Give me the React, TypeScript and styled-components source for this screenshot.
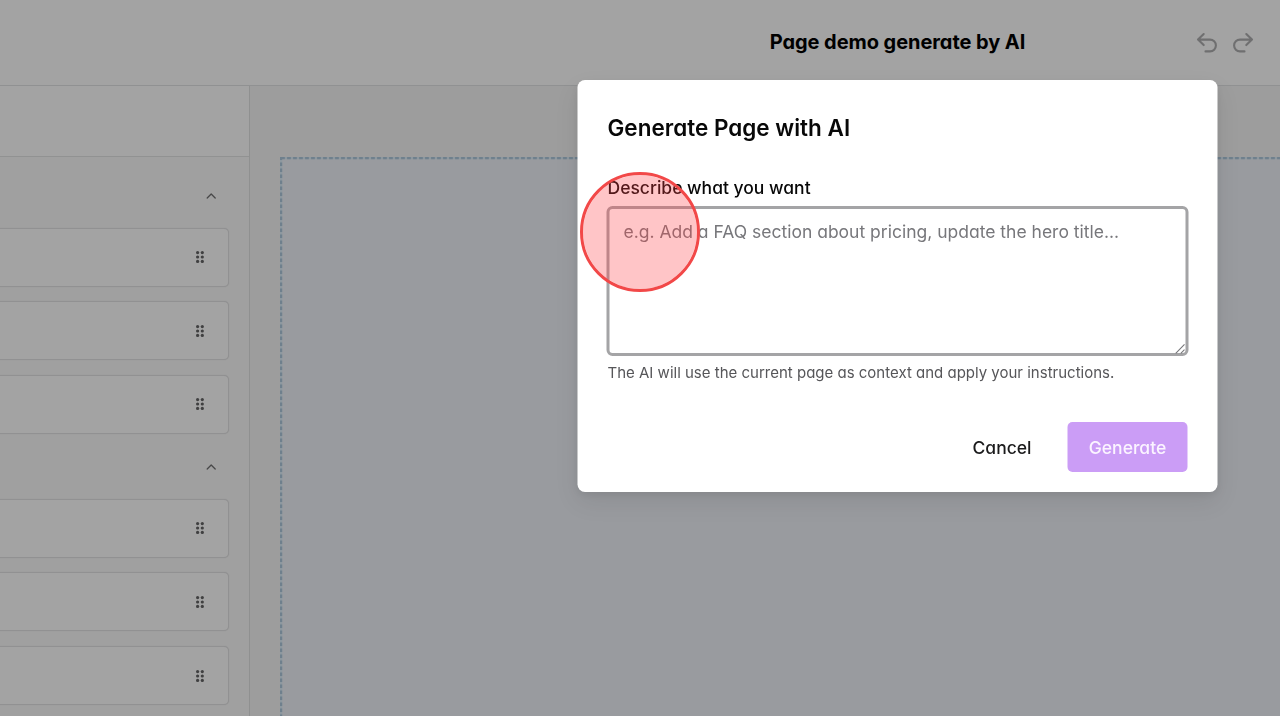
import React from 'react';
import styled, { createGlobalStyle } from 'styled-components';

const GlobalStyle = createGlobalStyle`
  *, *::before, *::after { box-sizing: border-box; }
  body {
    margin: 0;
    overflow: hidden;
    font-family: Inter, "Liberation Sans", sans-serif;
    font-feature-settings: "cv11" 1;
    color: #080808;
  }
  button, textarea { font: inherit; font-feature-settings: inherit; }
`;

const Page = styled.div`
  width: 1280px;
  height: 716px;
  display: flex;
  flex-direction: column;
  overflow: hidden;
  background: #a3a3a3;
`;

const Header = styled.header`
  flex: none;
  height: 86px;
  display: grid;
  grid-template-columns: 515px 765px;
  border-bottom: 1px solid #909192;
`;

const HeaderMain = styled.div`
  grid-column: 2;
  display: grid;
  grid-template-columns: 1fr auto 1fr;
  align-items: center;
`;

const PageTitle = styled.h1`
  grid-column: 2;
  margin: 0;
  padding-bottom: 1px;
  font-size: 20px;
  line-height: 28px;
  font-weight: 700;
  letter-spacing: -0.06px;
  color: #000;
  white-space: nowrap;
`;

const History = styled.div`
  display: flex;
  justify-content: flex-end;
  gap: 12px;
  padding-right: 25px;
  color: #6f6f70;
`;

const IconButton = styled.button`
  border: 0;
  padding: 0;
  background: none;
  color: inherit;
  display: flex;
`;

const Workspace = styled.div`
  flex: 1;
  min-height: 0;
  display: flex;
`;

const Sidebar = styled.aside`
  flex: none;
  width: 250px;
  overflow: hidden;
  background: #a0a0a0;
  border-right: 1px solid #8f9090;
`;

const SidebarTop = styled.div`
  height: 71px;
  background: #a3a3a3;
  border-bottom: 1px solid #919292;
`;

const Group = styled.section`
  display: flex;
  flex-direction: column;
`;

const GroupHeader = styled.div<{ $height: number }>`
  height: ${p => p.$height}px;
  display: flex;
  justify-content: flex-end;
  align-items: flex-end;
  padding: 0 32px 26px 0;
  color: #484849;
`;

const CardList = styled.div`
  display: flex;
  flex-direction: column;
  gap: 14.7px;
`;

const Card = styled.div`
  width: 228.5px;
  height: 59px;
  display: flex;
  align-items: center;
  justify-content: flex-end;
  padding-right: 21.5px;
  border: 1px solid #919192;
  border-left: 0;
  border-radius: 0 5px 5px 0;
  background: #a3a3a3;
  box-shadow: 0 0 1px rgba(0, 0, 0, 0.14);
  color: #404041;
`;

const CanvasArea = styled.main`
  flex: 1;
  min-width: 0;
  overflow: hidden;
  padding: 71px 0 0 30px;
  background: #9d9d9d;
`;

const DropZone = styled.div`
  width: 1020px;
  height: 580px;
  background: #999b9f;
`;

const DropOutline = styled.svg`
  display: block;
  width: 100%;
  height: 100%;
`;

const Dialog = styled.div`
  position: fixed;
  left: 578px;
  top: 80px;
  transform: translateX(-0.5px);
  width: 640px;
  height: 412px;
  display: flex;
  flex-direction: column;
  padding: 32px 30px 20px 30px;
  border-radius: 7.5px;
  background: #fff;
  box-shadow: 0 10px 24px rgba(0, 0, 0, 0.08), 0 3px 8px rgba(0, 0, 0, 0.07);
`;

const DialogTitle = styled.h2`
  margin: 0 0 29px;
  font-size: 22.5px;
  line-height: 32px;
  font-weight: 600;
`;

const Label = styled.label`
  margin-bottom: 3px;
  font-size: 17.5px;
  line-height: 30px;
  height: 30px;
  font-weight: 500;
`;

const PromptField = styled.div`
  position: relative;
  flex: none;
  display: flex;
  margin: 0 -1px;
  height: 150px;
`;

const Prompt = styled.textarea`
  width: 100%;
  height: 100%;
  padding: 8.5px 14px;
  border: 3px solid #a4a4a6;
  border-radius: 6px;
  outline: 0;
  background: #fff;
  font-size: 17.5px;
  line-height: 28px;
  resize: none;
  overflow: hidden;
  &::placeholder { color: #77777b; opacity: 1; }
`;

const ResizeHandle = styled.svg`
  position: absolute;
  right: 2px;
  bottom: 1.5px;
`;

const Hint = styled.p`
  margin: 4.5px 0 0;
  font-size: 15px;
  line-height: 24px;
  color: #565659;
`;

const Actions = styled.div`
  margin-top: auto;
  display: flex;
  justify-content: flex-end;
  gap: 15px;
`;

const Button = styled.button<{ $primary?: boolean }>`
  height: 50px;
  width: ${p => (p.$primary ? 120 : 101)}px;
  padding: 0;
  border: 0;
  border-radius: 5px;
  background: ${p => (p.$primary ? '#cb9df6' : 'transparent')};
  color: ${p => (p.$primary ? '#fbf4ff' : '#1b1b1c')};
  font-size: 17.5px;
  font-weight: 500;
`;

const ClickMarker = styled.div`
  position: fixed;
  left: 580px;
  top: 172px;
  width: 120px;
  height: 120px;
  border: 3px solid #f24848;
  border-radius: 50%;
  background: rgba(255, 64, 70, 0.3);
  background-clip: padding-box;
  pointer-events: none;
`;

const ArrowIcon = ({ flip }: { flip?: boolean }) => (
  <svg width="24" height="24" viewBox="0 0 24 24" fill="none" stroke="currentColor" strokeWidth="2.1" strokeLinecap="round" strokeLinejoin="round">
    <g transform={flip ? 'translate(24 0) scale(-1 1)' : undefined}>
      <path d="M8.7 14.1 3 8.6m0 0 5.7-5.5M3 8.6h12a5.9 5.9 0 0 1 0 11.8h-4.5" />
    </g>
  </svg>
);

const Chevron = () => (
  <svg width="12" height="12" viewBox="0 0 12 12" fill="none" stroke="currentColor" strokeWidth="1.3" strokeLinecap="round" strokeLinejoin="round">
    <path d="M2.2 8 6.2 4l4 4" />
  </svg>
);

const Grip = () => (
  <svg width="12" height="14" viewBox="0 0 12 14" fill="currentColor">
    {[2.6, 7, 11.4].map(y => (
      <React.Fragment key={y}>
        <circle cx="3.6" cy={y} r="1.6" />
        <circle cx="8.3" cy={y} r="1.6" />
      </React.Fragment>
    ))}
  </svg>
);

const BlockGroup = ({ headerHeight }: { headerHeight: number }) => (
  <Group>
    <GroupHeader $height={headerHeight}><Chevron /></GroupHeader>
    <CardList>
      {[0, 1, 2].map(i => <Card key={i}><Grip /></Card>)}
    </CardList>
  </Group>
);

export default function App() {
  return (
    <>
      <GlobalStyle />
      <Page>
        <Header>
          <HeaderMain>
            <span />
            <PageTitle>Page demo generate by AI</PageTitle>
            <History>
              <IconButton aria-label="Undo"><ArrowIcon /></IconButton>
              <IconButton aria-label="Redo"><ArrowIcon flip /></IconButton>
            </History>
          </HeaderMain>
        </Header>
        <Workspace>
          <Sidebar>
            <SidebarTop />
            <BlockGroup headerHeight={70.6} />
            <BlockGroup headerHeight={64.8} />
          </Sidebar>
          <CanvasArea>
            <DropZone>
              <DropOutline>
                <rect x="1.1" y="1.1" width="1017" height="577" fill="none" stroke="#8d989f" strokeWidth="2.2" />
                <rect x="1.1" y="1.1" width="1017" height="577" fill="none" stroke="#6f808d" strokeWidth="2.2" strokeDasharray="3.7 2.3" />
              </DropOutline>
            </DropZone>
          </CanvasArea>
        </Workspace>
      </Page>
      <Dialog role="dialog">
        <DialogTitle>Generate Page with AI</DialogTitle>
        <Label htmlFor="prompt">Describe what you want</Label>
        <PromptField>
          <Prompt id="prompt" placeholder="e.g. Add a FAQ section about pricing, update the hero title..." />
          <ResizeHandle width="12" height="12" viewBox="0 0 12 12" fill="none" stroke="#77777a" strokeWidth="1.1">
            <path d="M1.2 10.3 10 1.4M6.3 10.3 10 6.6" />
          </ResizeHandle>
        </PromptField>
        <Hint>The AI will use the current page as context and apply your instructions.</Hint>
        <Actions>
          <Button>Cancel</Button>
          <Button $primary>Generate</Button>
        </Actions>
      </Dialog>
      <ClickMarker />
    </>
  );
}
